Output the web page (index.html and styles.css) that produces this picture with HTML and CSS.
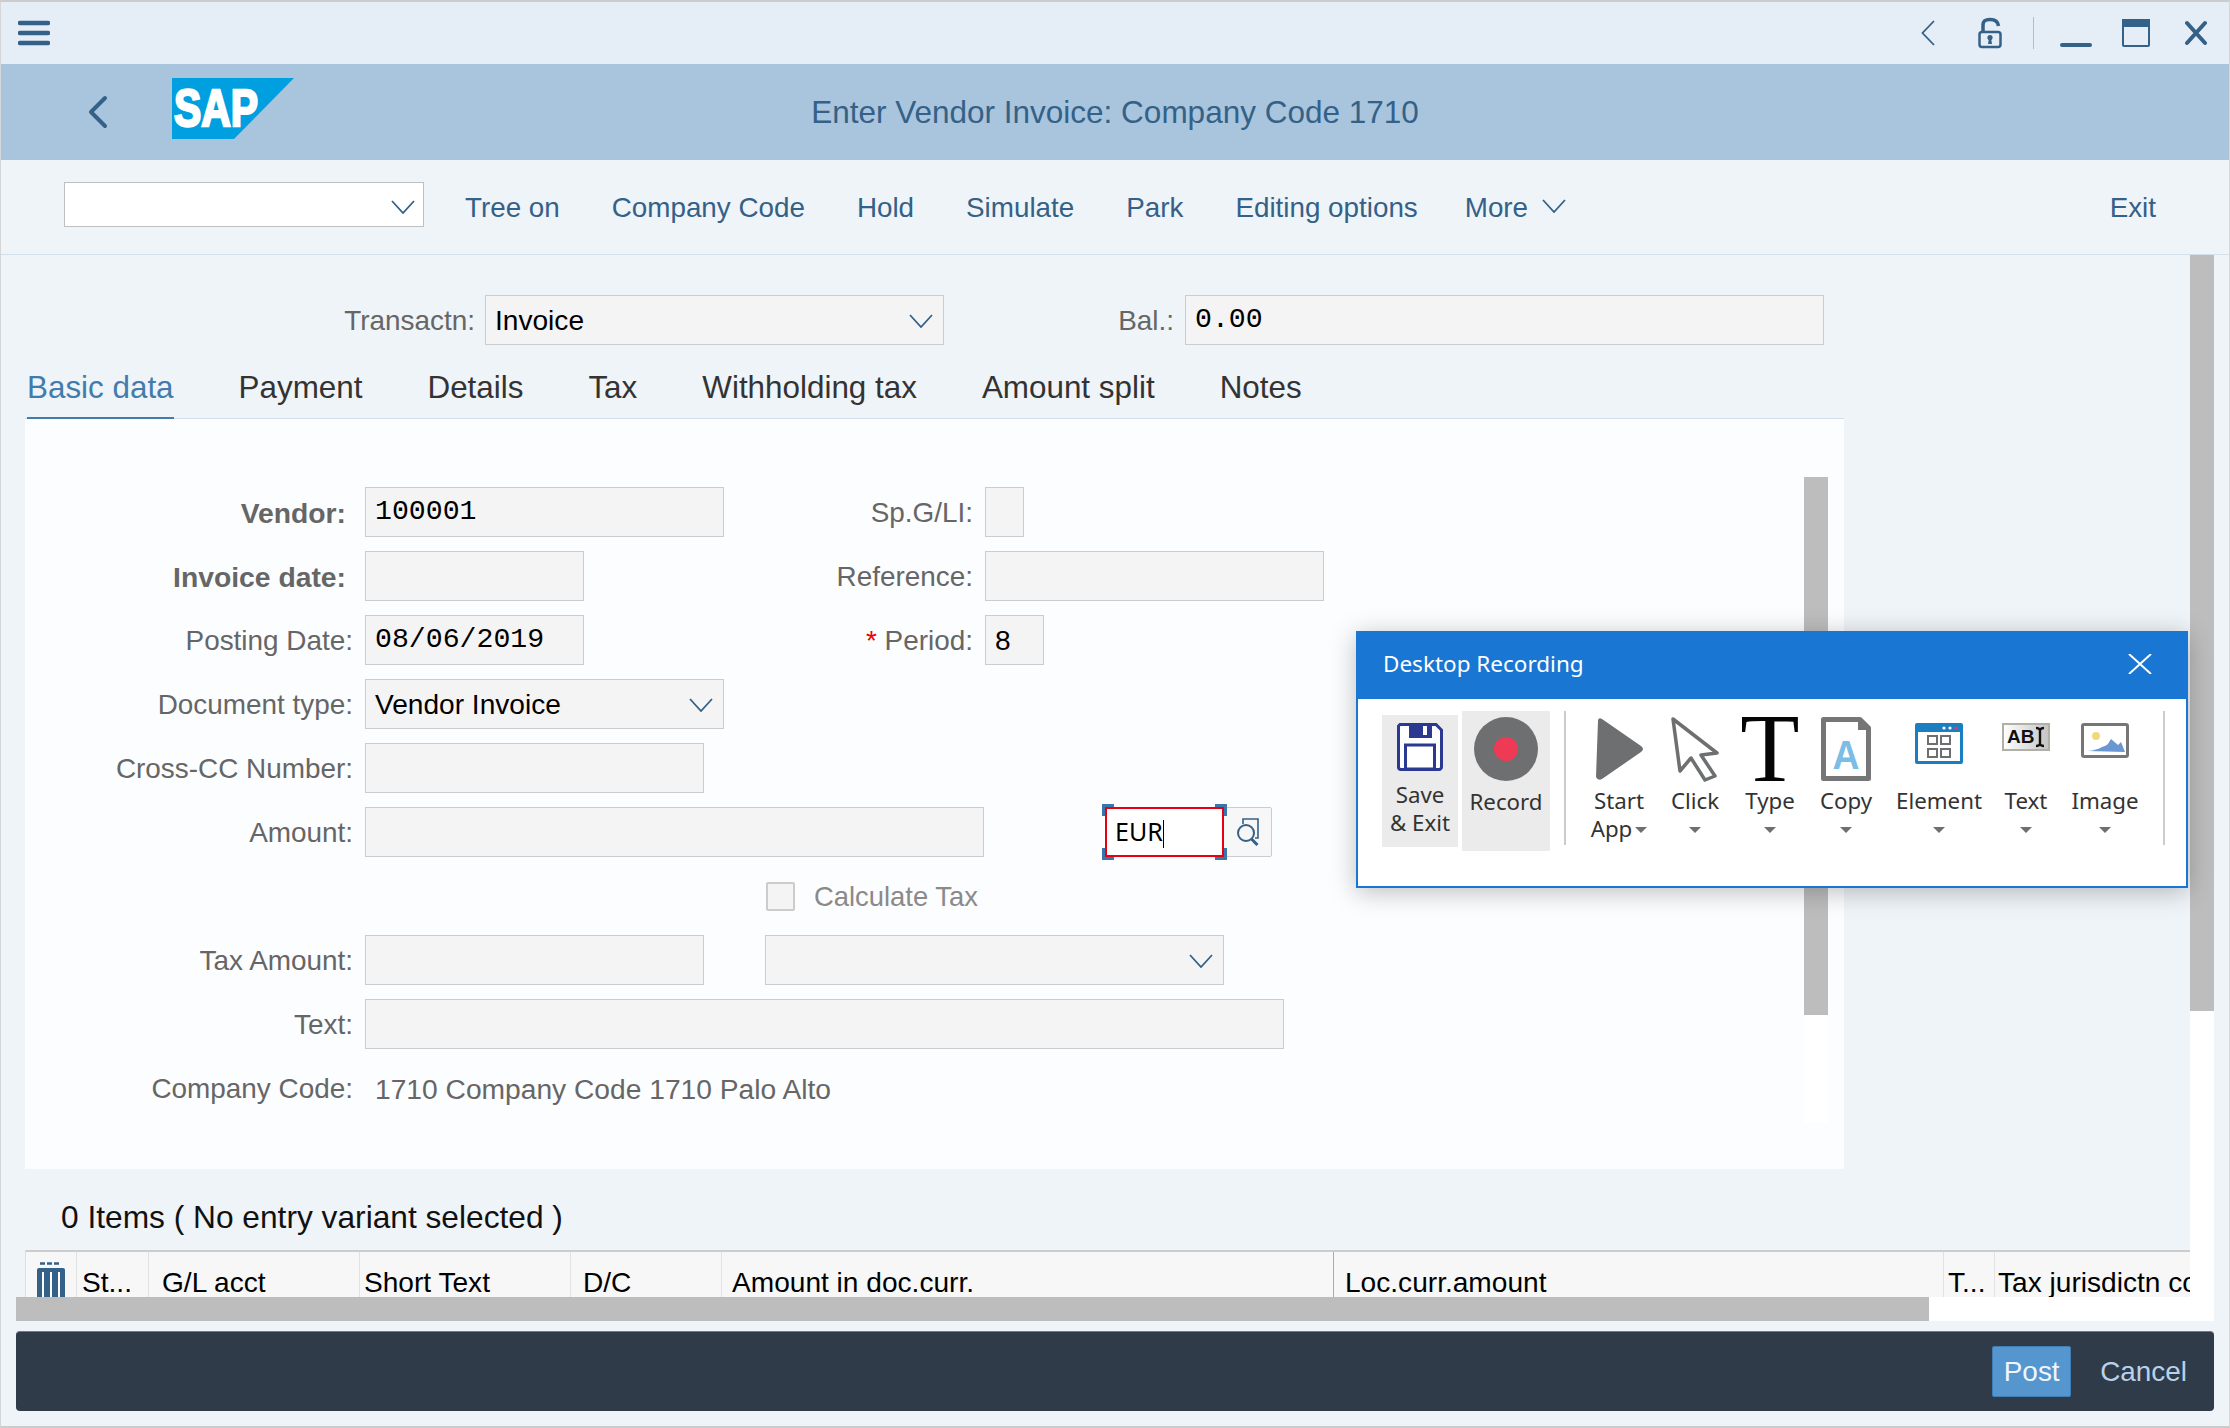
FILE: index.html
```html
<!DOCTYPE html>
<html lang="en">
<head>
    <meta charset="UTF-8">
    <title>Enter Vendor Invoice: Company Code 1710</title>
    <link rel="stylesheet" href="styles.css">
</head>
<body>

<div class="page">

    <div class="shellbar">
        <svg class="hamburger" width="32" height="40" viewBox="0 0 32 40"><path d="M2 10H30M2 20H30M2 30H30" stroke="#346187" stroke-width="4.5" stroke-linecap="round"/></svg>
        <div class="shell-icons">
            <svg width="14" height="40" viewBox="0 0 14 40"><path d="M13 8L1.500 20L13 32" fill="none" stroke="#346187" stroke-width="1.800"/></svg>
            <svg class="si-lock" width="24" height="40" viewBox="0 0 24 40">
                <path d="M5 18V12C5 7 8 6.500 12 6.500C16 6.500 20 8 20.500 13" fill="none" stroke="#346187" stroke-width="3.500"/>
                <rect x="1.500" y="19" width="21" height="15" rx="2.500" fill="none" stroke="#346187" stroke-width="2.500"/>
                <circle cx="12" cy="24.500" r="2.600" fill="#346187"/>
                <path d="M10 31L11 25H13L14 31Z" fill="#346187"/>
            </svg>
            <span class="shell-divider"></span>
            <svg class="si-min" width="32" height="40" viewBox="0 0 32 40"><path d="M2 32H30" stroke="#346187" stroke-width="4" stroke-linecap="round"/></svg>
            <svg class="si-max" width="28" height="40" viewBox="0 0 28 40"><rect x="1" y="7" width="26" height="26" rx="1" fill="none" stroke="#346187" stroke-width="2"/><rect x="0" y="6" width="28" height="8" fill="#346187"/></svg>
            <svg class="si-close" width="22" height="40" viewBox="0 0 22 40"><path d="M2 10L20 30M20 10L2 30" stroke="#346187" stroke-width="4" stroke-linecap="round"/></svg>
        </div>
    </div>

    <div class="titlebar">
        <div class="title-left">
            <svg class="back" width="20" height="34" viewBox="0 0 20 34"><path d="M17 3L3 17L17 31" fill="none" stroke="#346187" stroke-width="4" stroke-linecap="round" stroke-linejoin="round"/></svg>
            <svg class="logo" width="122" height="61" viewBox="0 0 122 61">
                <path d="M0 0H122L62 61H0Z" fill="#009fe0"/>
                <text x="2" y="48" class="logo-text" textLength="84" lengthAdjust="spacingAndGlyphs">SAP</text>
            </svg>
        </div>
        <div class="title-text">Enter Vendor Invoice: Company Code 1710</div>
    </div>

    <div class="toolbar">
        <div class="tb-select">
            <svg class="chev" width="24" height="14" viewBox="0 0 24 14"><path d="M1 1L12 13L23 1" fill="none" stroke="#346187" stroke-width="1.800"/></svg>
        </div>
        <a class="tb-link">Tree on</a>
        <a class="tb-link">Company Code</a>
        <a class="tb-link">Hold</a>
        <a class="tb-link">Simulate</a>
        <a class="tb-link">Park</a>
        <a class="tb-link">Editing options</a>
        <a class="tb-link tb-more">More
            <svg class="chev-more" width="24" height="14" viewBox="0 0 24 14"><path d="M1 1L12 13L23 1" fill="none" stroke="#346187" stroke-width="1.800"/></svg>
        </a>
        <a class="tb-link tb-exit">Exit</a>
    </div>

    <div class="workarea">
        <div class="work-top">
            <div class="content">
                <div class="head-row">
                    <label class="lab-transactn">Transactn:</label>
                    <div class="field field-transactn">Invoice
                        <svg class="chev" width="24" height="14" viewBox="0 0 24 14"><path d="M1 1L12 13L23 1" fill="none" stroke="#346187" stroke-width="1.800"/></svg>
                    </div>
                    <label class="lab-bal">Bal.:</label>
                    <div class="field field-bal mono">0.00</div>
                </div>

                <div class="tabs">
                    <span class="tab active">Basic data</span>
                    <span class="tab">Payment</span>
                    <span class="tab">Details</span>
                    <span class="tab">Tax</span>
                    <span class="tab">Withholding tax</span>
                    <span class="tab">Amount split</span>
                    <span class="tab">Notes</span>
                </div>

                <div class="panel">
                    <div class="fields">
                        <div class="row">
                            <label class="lab bold">Vendor:</label>
                            <div class="cell"><div class="field w-359 mono">100001</div></div>
                            <label class="lab2">Sp.G/LI:</label>
                            <div class="field w-39"></div>
                        </div>
                        <div class="row">
                            <label class="lab bold">Invoice date:</label>
                            <div class="cell"><div class="field w-219"></div></div>
                            <label class="lab2">Reference:</label>
                            <div class="field w-339"></div>
                        </div>
                        <div class="row">
                            <label class="lab">Posting Date:</label>
                            <div class="cell"><div class="field w-219 mono">08/06/2019</div></div>
                            <label class="lab2"><span class="req">*</span> Period:</label>
                            <div class="field w-59">8</div>
                        </div>
                        <div class="row">
                            <label class="lab">Document type:</label>
                            <div class="cell">
                                <div class="field w-359">Vendor Invoice
                                    <svg class="chev" width="24" height="14" viewBox="0 0 24 14"><path d="M1 1L12 13L23 1" fill="none" stroke="#346187" stroke-width="1.800"/></svg>
                                </div>
                            </div>
                        </div>
                        <div class="row">
                            <label class="lab">Cross-CC Number:</label>
                            <div class="cell"><div class="field w-339"></div></div>
                        </div>
                        <div class="row row-flex">
                            <label class="lab">Amount:</label>
                            <div class="field w-619"></div>
                            <div class="currency">
                                <div class="currency-input">EUR<span class="caret-bar"></span>
                                    <span class="handle h-tl"></span><span class="handle h-tr"></span>
                                    <span class="handle h-bl"></span><span class="handle h-br"></span>
                                </div>
                                <div class="f4">
                                    <svg width="24" height="28" viewBox="0 0 24 28">
                                        <path d="M7 6V1H22V20H19" fill="none" stroke="#346187" stroke-width="1.600"/>
                                        <circle cx="10" cy="15" r="8" fill="none" stroke="#346187" stroke-width="2"/>
                                        <path d="M15.500 21L21.500 27" stroke="#346187" stroke-width="3"/>
                                    </svg>
                                </div>
                            </div>
                        </div>
                        <div class="row row-flex">
                            <span class="check"></span>
                            <span class="check-label">Calculate Tax</span>
                        </div>
                        <div class="row row-flex">
                            <label class="lab">Tax Amount:</label>
                            <div class="field w-339"></div>
                            <div class="field w-459 tax-select">
                                <svg class="chev" width="24" height="14" viewBox="0 0 24 14"><path d="M1 1L12 13L23 1" fill="none" stroke="#346187" stroke-width="1.800"/></svg>
                            </div>
                        </div>
                        <div class="row row-flex">
                            <label class="lab">Text:</label>
                            <div class="field w-919"></div>
                        </div>
                        <div class="row row-flex">
                            <label class="lab">Company Code:</label>
                            <span class="static-value">1710 Company Code 1710 Palo Alto</span>
                        </div>
                    </div>
                    <div class="inner-scroll"><div class="inner-thumb"></div></div>
                </div>

                <div class="items-title">0 Items ( No entry variant selected )</div>

                <div class="table-head">
                    <div class="th th-icon">
                        <svg width="30" height="36" viewBox="0 0 30 36">
                            <path d="M4 1.500H9M11 1.500H16M18 1.500H23" stroke="#346187" stroke-width="2.500"/>
                            <rect x="1" y="6" width="28" height="32" rx="2" fill="#346187"/>
                            <path d="M7 10V36M15 10V36M23 10V36" stroke="#fff" stroke-width="2"/>
                        </svg>
                    </div>
                    <div class="th p-5">St...</div>
                    <div class="th p-13">G/L acct</div>
                    <div class="th p-4">Short Text</div>
                    <div class="th p-12">D/C</div>
                    <div class="th p-10 th-dark">Amount in doc.curr.</div>
                    <div class="th p-11">Loc.curr.amount</div>
                    <div class="th p-4">T...</div>
                    <div class="th p-3">Tax jurisdictn code</div>
                </div>
            </div>
            <div class="page-scroll"><div class="page-thumb"></div></div>
        </div>
        <div class="hscroll"><div class="hthumb"></div></div>
    </div>

    <div class="footer">
        <button class="btn-post">Post</button>
        <button class="btn-cancel">Cancel</button>
    </div>
</div>

<!-- recording window floats over the SAP screen -->
<div class="recorder">
    <div class="rec-head">
        <span>Desktop Recording</span>
        <svg width="24" height="20" viewBox="0 0 24 20"><path d="M1 0L23 20M23 0L1 20" stroke="#fff" stroke-width="2"/></svg>
    </div>
    <div class="rec-body">
        <div class="tile tile-save">
            <svg width="46" height="48" viewBox="0 0 46 48">
                <path d="M3 1.500H39L44.500 7V44A2.500 2.500 0 0 1 42 46.500H4A2.500 2.500 0 0 1 1.500 44V3Z" fill="#fff" stroke="#2b3990" stroke-width="3"/>
                <rect x="12" y="1" width="23" height="14" fill="#2b3990"/>
                <rect x="26" y="3" width="4" height="9" fill="#fff"/>
                <rect x="8.500" y="22" width="29" height="24" fill="#fff" stroke="#2b3990" stroke-width="3"/>
            </svg>
            <div class="tile-label">Save<br>&amp; Exit</div>
        </div>
        <div class="tile tile-record">
            <svg width="64" height="64" viewBox="0 0 64 64"><circle cx="32" cy="32" r="32" fill="#6e6f71"/><circle cx="32" cy="32" r="12" fill="#ef3a55"/></svg>
            <div class="tile-label">Record</div>
        </div>
        <span class="rec-sep"></span>
        <div class="tools">
            <div class="tool">
                <svg class="tool-icon" viewBox="0 0 64 64"><path d="M11 4Q11 0 15 2L54 29Q58 32 54 35L15 62Q11 64 9 60Z" fill="#6e6f71"/></svg>
                <div class="tool-label">Start</div>
                <div class="tool-label">App<span class="tri tri-inline"></span></div>
            </div>
            <div class="tool">
                <svg class="tool-icon" viewBox="0 0 64 64"><path d="M10 2L54 36L38 38L52 59L42 63L28 41L17 54Z" fill="#fff" stroke="#6e6f71" stroke-width="3.500" stroke-linejoin="round"/></svg>
                <div class="tool-label">Click</div>
                <span class="tri"></span>
            </div>
            <div class="tool">
                <svg class="tool-icon" viewBox="0 0 64 64"><text x="32" y="64" class="big-t">T</text></svg>
                <div class="tool-label">Type</div>
                <span class="tri"></span>
            </div>
            <div class="tool">
                <svg class="tool-icon" viewBox="0 0 64 64">
                    <path d="M9.500 2.500H46L54.500 11V61.500H9.500Z" fill="#fff" stroke="#767676" stroke-width="5" stroke-linejoin="round"/>
                    <path d="M44 1H47L56 10V13H44Z" fill="#767676"/>
                    <text x="32" y="52" class="copy-a" textLength="27" lengthAdjust="spacingAndGlyphs">A</text>
                </svg>
                <div class="tool-label">Copy</div>
                <span class="tri"></span>
            </div>
            <div class="tool">
                <svg class="tool-icon" viewBox="0 0 64 64">
                    <rect x="8" y="6" width="48" height="41" rx="2" fill="#1a7fc0"/>
                    <rect x="11" y="15" width="42" height="29" fill="#fff"/>
                    <circle cx="37" cy="11" r="1.600" fill="#fff"/><circle cx="43" cy="11" r="1.600" fill="#fff"/><circle cx="49" cy="11" r="1.600" fill="#ef3a55"/>
                    <g fill="none" stroke="#6e6f71" stroke-width="2"><rect x="21" y="19" width="9" height="8"/><rect x="34" y="19" width="9" height="8"/><rect x="21" y="32" width="9" height="8"/><rect x="34" y="32" width="9" height="8"/></g>
                </svg>
                <div class="tool-label">Element</div>
                <span class="tri"></span>
            </div>
            <div class="tool">
                <svg class="tool-icon" viewBox="0 0 64 64">
                    <defs><linearGradient id="abi" x1="0" x2="1"><stop offset="0" stop-color="#fff"/><stop offset="1" stop-color="#c4c4c4"/></linearGradient></defs>
                    <rect x="9" y="7" width="46" height="26" fill="url(#abi)" stroke="#b0b0a8" stroke-width="2"/>
                    <text x="13" y="26" class="abi-text">AB</text>
                    <path d="M42 11Q45 11 46 13Q47 11 50 11M46 13V27M42 29Q45 29 46 27Q47 29 50 29" fill="none" stroke="#111" stroke-width="2.400"/>
                </svg>
                <div class="tool-label">Text</div>
                <span class="tri"></span>
            </div>
            <div class="tool">
                <svg class="tool-icon" viewBox="0 0 64 64">
                    <rect x="9.500" y="7.500" width="45" height="32" rx="1.500" fill="#fff" stroke="#767676" stroke-width="3"/>
                    <circle cx="23" cy="19" r="4" fill="#f2d87a"/>
                    <path d="M15 34Q24 33 29 30Q33 29 35 27L38 22L45 28L48 25L52 35Z" fill="#6a96d3"/>
                </svg>
                <div class="tool-label">Image</div>
                <span class="tri"></span>
            </div>
        </div>
        <span class="rec-sep rec-sep-end"></span>
    </div>
</div>

</body>
</html>
```

FILE: styles.css
```css
* {
    box-sizing: border-box;
}
body {
    margin: 0;
    width: 2230px;
    height: 1428px;
    overflow: hidden;
    position: relative;
    font-family: "Liberation Sans", Arial, sans-serif;
    font-size: 27.9px;
    background-color: #eff4f9;
    color: #333;
}
.page {
    width: 2230px;
    height: 1428px;
    border: 1px solid #d4d6d8;
    border-top: 2px solid #ccc;
    border-bottom: 2px solid #ccc;
    display: flex;
    flex-direction: column;
}

/* shell */
.shellbar {
    height: 62px;
    background-color: #e5edf6;
    display: flex;
    align-items: center;
    justify-content: space-between;
    padding: 0 22px 0 17px;
}
.shell-icons {
    display: flex;
    align-items: center;
}
.si-lock {
    margin-left: 43px;
}
.shell-divider {
    width: 1px;
    height: 32px;
    background-color: #bbb;
    margin-left: 31px;
}
.si-min {
    margin-left: 26px;
}
.si-max {
    margin-left: 30px;
}
.si-close {
    margin-left: 35px;
}

.titlebar {
    height: 96px;
    background-color: #a9c4dd;
    display: grid;
    grid-template-columns: 1fr auto 1fr;
    align-items: center;
}
.title-left {
    display: flex;
    align-items: center;
    padding-left: 87px;
}
.logo {
    margin-left: 64px;
    margin-top: -8px;
}
.logo-text {
    font-family: "Liberation Sans", Arial, sans-serif;
    font-weight: bold;
    font-size: 52px;
    fill: #fff;
    stroke: #fff;
    stroke-width: 2.5px;
}
.title-text {
    font-size: 31.5px;
    color: #346187;
}

.toolbar {
    height: 95px;
    display: flex;
    align-items: center;
    padding: 0 73px 0 63px;
    border-bottom: 1px solid #d3e0ec;
    font-size: 27.8px;
}
.tb-select {
    width: 360px;
    height: 45px;
    background-color: #fff;
    border: 1px solid #bfbfbf;
    margin-bottom: 5px;
    margin-right: 41px;
    position: relative;
}
.tb-select .chev {
    right: 8px;
    top: 17px;
}
.tb-link {
    color: #346187;
    margin-right: 52px;
    padding-top: 2px;
}
.tb-more {
    margin-left: -5px;
    display: flex;
    align-items: center;
    margin-right: 0;
}
.chev-more {
    margin-left: 14px;
    margin-bottom: 4px;
}
.tb-exit {
    margin-left: auto;
    margin-right: 0;
}
.chev {
    position: absolute;
    right: 10px;
    top: 19px;
}

/* work area */
.workarea {
    height: 1066px;
}
.work-top {
    height: 1042px;
    display: flex;
}
.content {
    width: 2189px;
    padding-left: 24px;
}
.page-scroll {
    width: 24px;
    background-color: #fff;
}
.page-thumb {
    height: 756px;
    background-color: #bdbdbd;
}
.hscroll {
    margin-left: 15px;
    width: 2198px;
    height: 24px;
    background-color: #fff;
}
.hthumb {
    width: 1913px;
    height: 24px;
    background-color: #bdbdbd;
}

.head-row {
    display: flex;
    align-items: center;
    padding-top: 40px;
    color: #666;
}
.lab-transactn {
    width: 450px;
    text-align: right;
    padding-top: 2px;
}
.lab-bal {
    width: 230px;
    text-align: right;
    padding-top: 2px;
}
.field {
    height: 50px;
    line-height: 50px;
    padding-left: 9px;
    background-color: #f4f4f4;
    border: 1px solid #ccc;
    color: #000;
    font-size: 28.1px;
    position: relative;
    flex: none;
}
.field .chev {
    top: 18px;
}
.mono {
    font-family: "Liberation Mono", "Courier New", monospace;
    font-size: 28.2px;
    line-height: 48px;
}
.field-transactn {
    width: 459px;
    margin-left: 10px;
}
.field-bal {
    width: 639px;
    margin-left: 11px;
}

.tabs {
    height: 74px;
    width: 1819px;
    display: flex;
    gap: 65px;
    padding-left: 2px;
    border-bottom: 1px solid #d3e0ec;
    font-size: 31.4px;
}
.tab {
    height: 74px;
    line-height: 85px;
    color: #333;
}
.tab.active {
    color: #427cac;
    border-bottom: 2px solid #427cac;
}

.panel {
    width: 1819px;
    height: 750px;
    background-color: #fcfdfe;
    display: flex;
    justify-content: space-between;
}
.fields {
    padding-top: 68px;
}
.row {
    display: grid;
    grid-template-columns: 340px 400px 220px 1fr;
    align-items: center;
    height: 50px;
    margin-bottom: 14px;
    color: #666;
}
.row-flex {
    display: flex;
}
.lab {
    width: 340px;
    flex: none;
    text-align: right;
    padding: 2px 12px 0 0;
}
.lab.bold {
    font-weight: bold;
    font-size: 28.3px;
    padding-right: 19px;
}
.lab2 {
    text-align: right;
    padding: 2px 12px 0 0;
}
.req {
    color: #e00;
}
.w-39 { width: 39px; }
.w-59 { width: 59px; }
.w-219 { width: 219px; }
.w-339 { width: 339px; }
.w-359 { width: 359px; }
.w-459 { width: 459px; }
.w-619 { width: 619px; }
.w-919 { width: 919px; }
.tax-select {
    margin-left: 61px;
}

.currency {
    display: flex;
    margin-left: 121px;
    height: 50px;
    background-color: #f7f7f7;
    border: 1px solid #ccc;
    border-radius: 2px;
}
.currency-input {
    width: 119px;
    height: 50px;
    margin-top: -1px;
    margin-left: -1px;
    border: 2px solid #e60012;
    background-color: #fff;
    color: #000;
    font-family: "Noto Sans", sans-serif;
    font-size: 25px;
    line-height: 44px;
    padding-left: 8px;
    position: relative;
}
.caret-bar {
    display: inline-block;
    width: 1px;
    height: 28px;
    background-color: #000;
    vertical-align: -7px;
}
.handle {
    position: absolute;
    width: 12px;
    height: 12px;
    border: 0 solid #3b76ab;
}
.h-tl {
    left: -5px;
    top: -5px;
    border-width: 3px 0 0 3px;
}
.h-tr {
    right: -5px;
    top: -5px;
    border-width: 3px 3px 0 0;
}
.h-bl {
    left: -5px;
    bottom: -5px;
    border-width: 0 0 3px 3px;
}
.h-br {
    right: -5px;
    bottom: -5px;
    border-width: 0 3px 3px 0;
}
.f4 {
    width: 47px;
    display: flex;
    align-items: center;
    justify-content: center;
}
.check {
    width: 29px;
    height: 29px;
    margin-left: 741px;
    background-color: #f4f4f4;
    border: 2px solid #ccc;
    border-radius: 2px;
}
.check-label {
    margin-left: 19px;
    padding-top: 2px;
    font-size: 27.4px;
    color: #8a8a8a;
}
.static-value {
    margin-left: 10px;
    padding-top: 2px;
    font-size: 28.2px;
}

.inner-scroll {
    width: 24px;
    height: 646px;
    margin-top: 58px;
    margin-right: 16px;
    background-color: #fff;
}
.inner-thumb {
    height: 538px;
    background-color: #bdbdbd;
}

.items-title {
    height: 81px;
    padding: 31px 0 0 36px;
    font-size: 31.7px;
    line-height: 34px;
    color: #111;
}
.table-head {
    height: 47px;
    width: 2165px;
    overflow: hidden;
    background-color: #f7f7f7;
    border-top: 2px solid #ccc;
    border-left: 1px solid #ddd;
    display: grid;
    grid-template-columns: 51px 72px 211px 211px 151px 612px 610px 51px 1fr;
    color: #000;
    font-size: 28.1px;
    white-space: nowrap;
}
.th {
    border-right: 1px solid #e2e2e2;
    line-height: 32px;
    padding-top: 15px;
    height: 60px;
    overflow: hidden;
}
.th:last-child {
    border-right: none;
}
.th-icon {
    padding: 10px 0 0 10px;
}
.th-dark {
    border-right-color: #aaa;
}
.p-3 { padding-left: 3px; }
.p-4 { padding-left: 4px; }
.p-5 { padding-left: 5px; }
.p-10 { padding-left: 10px; }
.p-11 { padding-left: 11px; }
.p-12 { padding-left: 12px; }
.p-13 { padding-left: 13px; }

.footer {
    margin: 10px 15px 0 15px;
    height: 80px;
    background-color: #2f3b48;
    border-top: 1px solid #6f7a85;
    border-radius: 4px;
    display: flex;
    align-items: center;
    justify-content: flex-end;
    padding-right: 27px;
}
.footer button {
    font-family: inherit;
    font-size: 27.9px;
    border: none;
    background: none;
    padding: 0;
}
.footer .btn-post {
    width: 79px;
    height: 51px;
    background-color: #5496cd;
    border: 1px solid #3f7fb5;
    border-radius: 2px;
    color: #eef5fb;
    margin-right: 29px;
}
.footer .btn-cancel {
    color: #b8d2ea;
}

/* recorder window */
.recorder {
    position: absolute;
    left: 1356px;
    top: 631px;
    width: 832px;
    height: 257px;
    background-color: #fff;
    border: 2px solid #1976d2;
    box-shadow: 0 4px 24px rgba(0, 0, 0, 0.25);
    font-family: "Noto Sans", sans-serif;
}
.rec-head {
    height: 66px;
    background-color: #1976d2;
    color: #fff;
    font-size: 22.5px;
    display: flex;
    align-items: center;
    justify-content: space-between;
    padding: 0 34px 5px 25px;
}
.rec-body {
    display: flex;
    align-items: flex-start;
    padding: 12px 0 0 24px;
    font-size: 22.3px;
    color: #333;
}
.tile {
    background-color: #ebebeb;
    text-align: center;
}
.tile svg {
    display: block;
    margin: 0 auto;
}
.tile-save {
    width: 76px;
    height: 132px;
    margin-top: 4px;
    padding-top: 8px;
}
.tile-save .tile-label {
    margin-top: 10px;
    line-height: 28px;
}
.tile-record {
    width: 88px;
    height: 140px;
    margin-left: 4px;
    padding-top: 6px;
}
.tile-record .tile-label {
    margin-top: 7px;
    line-height: 28px;
}
.rec-sep {
    width: 2px;
    height: 134px;
    margin-left: 14px;
    background-color: #ccc;
}
.tools {
    display: grid;
    grid-template-columns: 78px 74px 76px 76px 110px 64px 94px;
    margin-left: 14px;
}
.rec-sep-end {
    margin-left: 11px;
}
.tool {
    height: 134px;
    padding-top: 6px;
    text-align: center;
}
.tool-icon {
    display: block;
    width: 64px;
    height: 64px;
    margin: 0 auto 6px;
    overflow: visible;
}
.tool-label {
    line-height: 28px;
    white-space: nowrap;
}
.tri {
    display: block;
    width: 0;
    height: 0;
    margin: 12px auto 0;
    border-left: 6px solid transparent;
    border-right: 6px solid transparent;
    border-top: 6px solid #6e6f71;
}
.tri-inline {
    display: inline-block;
    margin: 0 0 3px 3px;
    vertical-align: middle;
}
.big-t {
    font-family: "Liberation Serif", "Times New Roman", serif;
    font-size: 97px;
    fill: #050505;
    text-anchor: middle;
}
.copy-a {
    font-family: "Liberation Sans", Arial, sans-serif;
    font-weight: bold;
    font-size: 40px;
    fill: #7cbde6;
    text-anchor: middle;
}
.abi-text {
    font-family: "Liberation Sans", Arial, sans-serif;
    font-weight: bold;
    font-size: 19px;
    fill: #111;
}
```
